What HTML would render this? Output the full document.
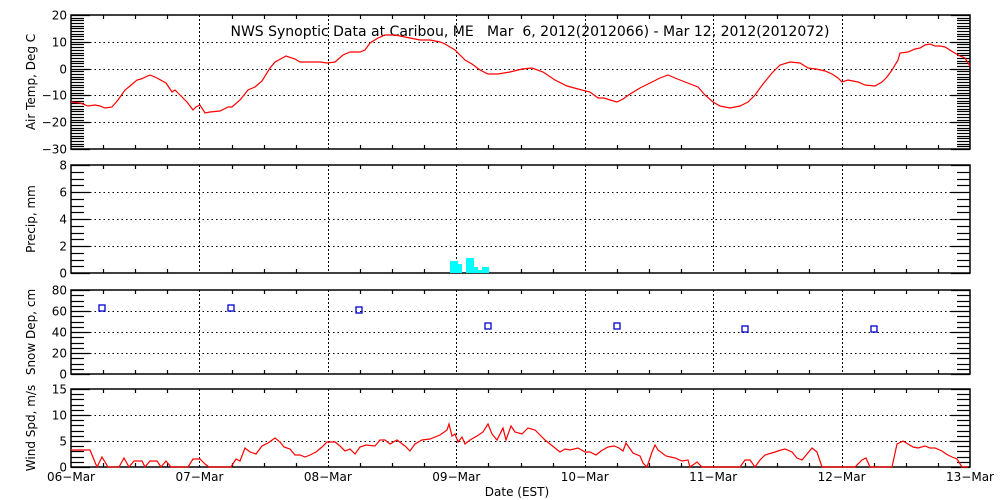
<!DOCTYPE html>
<html><head><meta charset="utf-8"><style>
html,body{margin:0;padding:0;background:#fff;width:1000px;height:500px;overflow:hidden}
svg{display:block}
text{font-family:"DejaVu Sans","Liberation Sans",sans-serif;font-size:12px;fill:#000}
</style></head><body>
<svg id="s" width="1000" height="500" viewBox="0 0 1000 500" xmlns="http://www.w3.org/2000/svg">
<g id="g" stroke="#000" stroke-width="1" fill="none"></g>
<text x="530" y="36" text-anchor="middle" style="font-size:14px" xml:space="preserve">NWS Synoptic Data at Caribou, ME   Mar  6, 2012(2012066) - Mar 12, 2012(2012072)</text>
<text transform="translate(35,82) rotate(-90)" text-anchor="middle">Air Temp, Deg C</text>
<text transform="translate(35,219) rotate(-90)" text-anchor="middle">Precip, mm</text>
<text transform="translate(35,332) rotate(-90)" text-anchor="middle">Snow Dep, cm</text>
<text transform="translate(35,428) rotate(-90)" text-anchor="middle">Wind Spd, m/s</text>
<text x="517" y="496" text-anchor="middle">Date (EST)</text>
<g id="rd" fill="none" stroke="#f00" stroke-width="1.2"></g>
<g id="bl" fill="none" stroke="#00c" stroke-width="1.3"></g>
<g fill="#0ff">
<rect x="450" y="261" width="8" height="12"/><rect x="458" y="264" width="4" height="9"/>
<rect x="466" y="258" width="8" height="15"/><rect x="474" y="267" width="4" height="6"/>
<rect x="478" y="270" width="4" height="3"/><rect x="482" y="267" width="7" height="6"/>
</g>
</svg>
<script>
var NS="http://www.w3.org/2000/svg",s=document.getElementById('s'),g=document.getElementById('g');
function el(p,t,a,txt){var e=document.createElementNS(NS,t);for(var k in a)e.setAttribute(k,a[k]);if(txt!=null)e.textContent=txt;p.appendChild(e);return e;}
function ln(x1,y1,x2,y2,extra){var a={x1:x1,y1:y1,x2:x2,y2:y2,stroke:'#000','stroke-width':1.2};if(extra)for(var k in extra)a[k]=extra[k];return el(g,'line',a);}
var X0=71,X1=970,DW=(X1-X0)/7;
var panels=[
 {t:15,b:149,min:-30,max:20,maj:10,mn:1},
 {t:165,b:273,min:0,max:8,maj:2,mn:0.5},
 {t:290,b:374,min:0,max:80,maj:20,mn:5},
 {t:389,b:467,min:0,max:15,maj:5,mn:1}];
panels.forEach(function(p){
 el(g,'rect',{x:X0,y:p.t,width:X1-X0,height:p.b-p.t,stroke:'#000','stroke-width':1.5,fill:'none'});
 var sc=(p.b-p.t)/(p.max-p.min);
 for(var v=p.min;v<=p.max+1e-6;v+=p.mn){
  var y=Math.round(p.b-(v-p.min)*sc)+0.5;
  var isM=Math.abs(v/p.maj-Math.round(v/p.maj))<1e-6;
  var L=isM?19:13;
  ln(X0,y,X0+L,y);
  ln(X1-L,y,X1,y);
  if(isM){
   el(s,'text',{x:67,y:y+4,'text-anchor':'end'},String(v).replace('-','\u2212'));
   if(v>p.min&&v<p.max) ln(X0+19,y,X1-19,y,{'stroke-dasharray':'1.5,3','stroke-width':1});
  }
 }
 for(var i=1;i<28;i++){
  var x=Math.round(X0+i*DW/4)+0.5;
  if(i%4==0) ln(x,p.t,x,p.b,{'stroke-dasharray':'2,2','stroke-width':1});
  else{ln(x,p.t,x,p.t+4);ln(x,p.b-4,x,p.b);}
 }
});
var days=['06-Mar','07-Mar','08-Mar','09-Mar','10-Mar','11-Mar','12-Mar','13-Mar'];
days.forEach(function(d,i){el(s,'text',{x:X0+i*DW,y:481,'text-anchor':'middle'},d.replace('-','\u2212'));});
var rd=document.getElementById('rd');
var temp="71,102 80,103 88,106 95,105 100,106 105,108 112,107 118,100 125,90 130,86 137,80 141,79 150,75 157,78 166,83 172,92 175,90 180,95 187,102 193,110 196,107 200,105 205,113 210,112 220,111 228,107 232,107 240,100 248,90 255,87 262,81 270,68 275,62 286,56 295,59 300,62 307,62 320,62 327,63 335,62 343,55 350,52 360,52 365,50 370,43 378,38 385,35 395,35 410,38 420,40 430,40 440,42 445,44 455,50 465,60 472,64 480,70 488,74 498,74 510,72 522,69 532,68 543,72 555,80 567,86 578,89 590,92 598,98 604,98 610,100 617,102 623,99 630,94 640,88 650,83 660,78 668,75 675,78 685,82 698,87 705,95 713,102 720,106 730,108 740,106 748,102 755,95 763,84 772,73 780,65 790,62 800,63 808,68 816,69 825,71 832,74 838,78 842,82 848,80 858,82 865,85 875,86 882,82 887,77 892,70 898,60 900,53 908,52 915,49 920,48 925,45 930,44 935,46 940,46 945,47 953,52 960,56 965,58 970,66";
var wind="71,450 90,450 97,467 102,457 108,467 119,467 124,458 129,467 134,461 142,461 145,467 150,461 157,461 161,467 166,461 171,467 188,467 193,459 200,459 205,464 209,467 231,467 236,459 240,461 245,448 250,452 256,454 262,446 268,443 275,438 280,442 284,447 290,449 295,455 300,455 305,457 310,455 316,452 322,447 327,442 335,442 340,446 345,451 350,449 355,454 360,447 366,445 375,446 380,440 385,440 390,444 397,440 405,446 410,451 415,444 422,440 430,439 440,435 447,430 449,424 452,436 455,434 458,442 462,437 465,444 470,440 477,436 483,432 488,424 492,434 497,440 503,428 506,440 511,426 515,432 522,434 528,428 535,430 540,435 545,440 550,444 555,448 560,452 565,449 570,450 578,448 585,452 590,452 596,455 601,451 608,447 614,446 619,448 623,451 626,443 633,453 640,456 643,463 647,467 652,452 655,445 658,450 666,456 675,458 682,461 688,460 690,467 697,462 702,467 740,467 745,460 750,460 755,467 760,460 765,455 775,452 781,450 785,449 792,452 797,458 802,460 807,454 812,448 817,452 822,467 855,467 862,460 866,458 870,467 892,467 897,444 903,441 908,444 913,447 918,448 925,446 930,448 935,448 942,451 946,454 952,457 957,459 962,467 968,467";
el(rd,'polyline',{points:temp});el(rd,'polyline',{points:wind});
var bl=document.getElementById('bl');
[[102,308],[231,308],[359,310],[488,326],[617,326],[745,329],[874,329]].forEach(function(p){
 el(bl,'rect',{x:p[0]-3,y:p[1]-3,width:6,height:6});});
</script>
</body></html>
